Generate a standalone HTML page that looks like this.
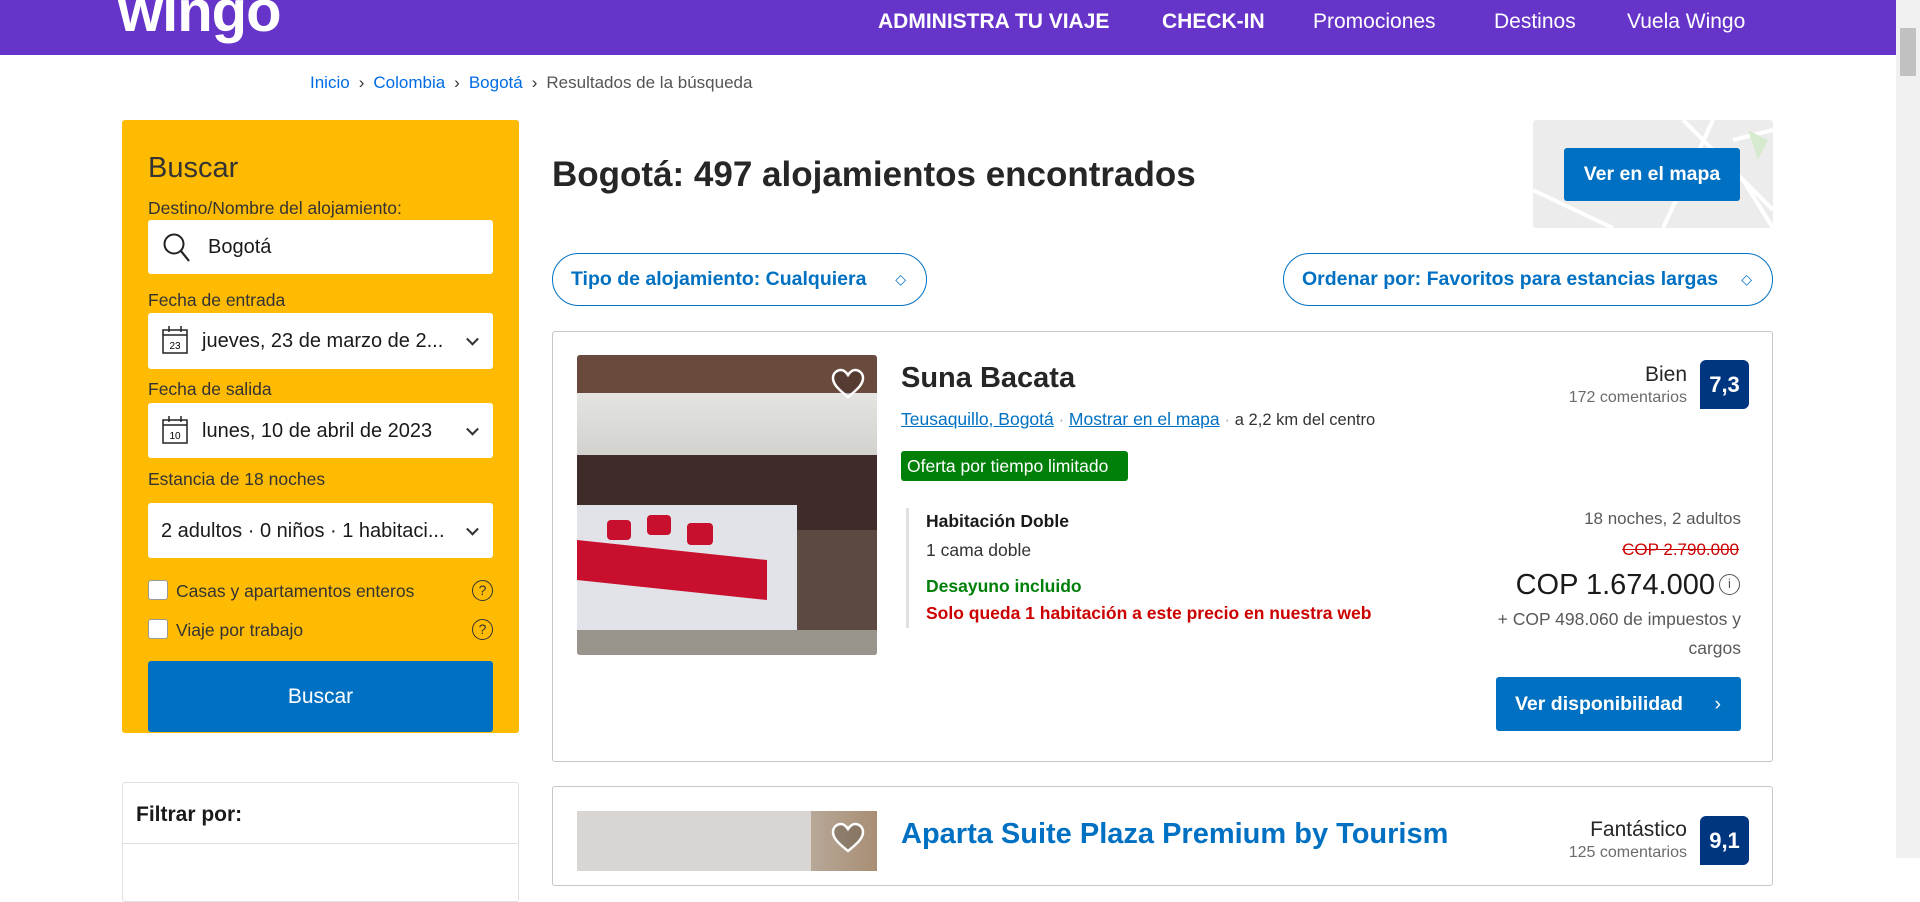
<!DOCTYPE html>
<html><head><meta charset="utf-8"><style>
*{box-sizing:border-box;margin:0;padding:0}
body{width:1920px;height:858px;overflow:hidden;background:#fff;font-family:"Liberation Sans",sans-serif;color:#1a1a1a;position:relative}
.a{position:absolute}
.hdr{left:0;top:0;width:1896px;height:55px;background:#6734c9}
.nav{color:#fff;font-size:21px;top:10px}
.sb{right:0;top:0;width:24px;height:858px;background:#f1f1f1}
.bc{top:73px;font-size:17px;color:#006ce4}
.side{left:122px;top:120px;width:397px;height:613px;background:#febb02;border-radius:3px}
.lbl{font-size:17.5px;color:#333;left:148px}
.inp{left:148px;width:345px;background:#fff;border-radius:3px;font-size:20px;color:#1a1a1a}
.chev{position:absolute;right:16px;top:50%;width:9px;height:9px;border-right:2px solid #333;border-bottom:2px solid #333;transform:translateY(-70%) rotate(45deg)}
.cb{left:148px;width:20px;height:20px;background:#fff;border:1px solid #999;border-radius:3px}
.q{left:472px;width:21px;height:21px;border:1.5px solid #333;border-radius:50%;font-size:14px;text-align:center;line-height:18px;color:#333}
.pill{height:53px;border:1px solid #0071c2;border-radius:27px;color:#0071c2;font-size:19.5px;font-weight:bold;line-height:51px;padding-left:18px}
.card{left:552px;width:1221px;border:1px solid #c6c6c6;border-radius:3px}
.lnk{color:#0071c2;text-decoration:underline;font-size:17.5px}
.score{width:49px;height:49px;background:#003580;color:#fff;font-size:22px;font-weight:bold;text-align:center;line-height:49px;border-radius:6px 6px 6px 0}
.sep{color:#333;padding:0 9px}
</style></head><body>
<div class="a hdr"></div>
<div class="a" style="left:118px;top:-22px;color:#fff;font-size:58px;font-weight:bold;letter-spacing:-1px">wingo</div>
<div class="a nav" style="left:878px;font-weight:bold">ADMINISTRA TU VIAJE</div>
<div class="a nav" style="left:1162px;font-weight:bold">CHECK-IN</div>
<div class="a nav" style="left:1313px">Promociones</div>
<div class="a nav" style="left:1494px">Destinos</div>
<div class="a nav" style="left:1627px">Vuela Wingo</div>
<div class="a sb"><div style="position:absolute;left:4px;top:28px;width:16px;height:48px;background:#c1c1c1"></div></div>

<div class="a bc" style="left:310px">Inicio<span class="sep">›</span>Colombia<span class="sep">›</span>Bogotá<span class="sep">›</span><span style="color:#555">Resultados de la búsqueda</span></div>

<div class="a side"></div>
<div class="a" style="left:148px;top:152px;font-size:29px;color:#333">Buscar</div>
<div class="a lbl" style="top:198px">Destino/Nombre del alojamiento:</div>
<div class="a inp" style="top:220px;height:54px;padding:16px 0 0 60px">Bogotá
<svg style="position:absolute;left:14px;top:12px" width="30" height="32" viewBox="0 0 30 32"><circle cx="12" cy="12" r="9.5" fill="none" stroke="#222" stroke-width="2"/><line x1="19" y1="19" x2="27" y2="29" stroke="#222" stroke-width="2.2"/></svg></div>
<div class="a lbl" style="top:290px">Fecha de entrada</div>
<div class="a inp" style="top:313px;height:56px;padding:17px 0 0 54px">jueves, 23 de marzo de 2...<div class="chev"></div>
<svg style="position:absolute;left:13px;top:12px" width="28" height="30" viewBox="0 0 28 30"><rect x="2" y="5" width="24" height="23" fill="none" stroke="#222" stroke-width="1.5"/><line x1="2" y1="10" x2="26" y2="10" stroke="#222" stroke-width="1.5"/><line x1="8" y1="1" x2="8" y2="7" stroke="#222" stroke-width="1.5"/><line x1="20" y1="1" x2="20" y2="7" stroke="#222" stroke-width="1.5"/><text x="14" y="24" font-size="10" text-anchor="middle" font-family="Liberation Sans">23</text></svg></div>
<div class="a lbl" style="top:379px">Fecha de salida</div>
<div class="a inp" style="top:403px;height:55px;padding:17px 0 0 54px">lunes, 10 de abril de 2023<div class="chev"></div>
<svg style="position:absolute;left:13px;top:12px" width="28" height="30" viewBox="0 0 28 30"><rect x="2" y="5" width="24" height="23" fill="none" stroke="#222" stroke-width="1.5"/><line x1="2" y1="10" x2="26" y2="10" stroke="#222" stroke-width="1.5"/><line x1="8" y1="1" x2="8" y2="7" stroke="#222" stroke-width="1.5"/><line x1="20" y1="1" x2="20" y2="7" stroke="#222" stroke-width="1.5"/><text x="14" y="24" font-size="10" text-anchor="middle" font-family="Liberation Sans">10</text></svg></div>
<div class="a lbl" style="top:469px">Estancia de 18 noches</div>
<div class="a inp" style="top:503px;height:55px;padding:17px 0 0 13px">2 adultos · 0 niños · 1 habitaci...<div class="chev"></div></div>
<div class="a cb" style="top:580px"></div><div class="a lbl" style="left:176px;top:581px">Casas y apartamentos enteros</div><div class="a q" style="top:580px">?</div>
<div class="a cb" style="top:619px"></div><div class="a lbl" style="left:176px;top:620px">Viaje por trabajo</div><div class="a q" style="top:619px">?</div>
<div class="a" style="left:148px;top:661px;width:345px;height:71px;background:#0071c2;border-radius:3px;color:#fff;font-size:21px;text-align:center;line-height:71px">Buscar</div>
<div class="a" style="left:122px;top:782px;width:397px;height:120px;border:1px solid #e0e0e0;border-radius:3px"></div>
<div class="a" style="left:136px;top:803px;font-size:21px;font-weight:bold">Filtrar por:</div>
<div class="a" style="left:123px;top:843px;width:395px;height:1px;background:#e0e0e0"></div>

<div class="a" style="left:552px;top:155px;font-size:35px;font-weight:bold;color:#262626">Bogotá: 497 alojamientos encontrados</div>
<div class="a" style="left:1533px;top:120px;width:240px;height:108px;background:#ececec;border-radius:3px;overflow:hidden">
<svg width="240" height="108"><path d="M150 0 L240 90 M180 0 L130 108 M200 20 L240 10 M0 70 L80 108 M210 60 L240 108" stroke="#fff" stroke-width="4" fill="none"/><path d="M215 10 L235 20 L225 40 Z" fill="#d6ead0"/></svg></div>
<div class="a" style="left:1564px;top:148px;width:176px;height:53px;background:#0071c2;border-radius:3px;color:#fff;font-size:19.5px;font-weight:bold;text-align:center;line-height:53px">Ver en el mapa</div>
<div class="a pill" style="left:552px;top:253px;width:375px">Tipo de alojamiento: Cualquiera <span style="position:absolute;right:20px;font-size:14px;font-weight:normal">◇</span></div>
<div class="a pill" style="left:1283px;top:253px;width:490px">Ordenar por: Favoritos para estancias largas <span style="position:absolute;right:20px;font-size:14px;font-weight:normal">◇</span></div>

<div class="a card" style="top:331px;height:431px"></div>
<div class="a" style="left:577px;top:355px;width:300px;height:300px;border-radius:3px;overflow:hidden;background:#d9d9d6">
<div style="position:absolute;left:0;top:0;width:300px;height:38px;background:#6b4a3e"></div>
<div style="position:absolute;left:0;top:38px;width:300px;height:70px;background:linear-gradient(#e4e4e0,#cfcfcb)"></div>
<div style="position:absolute;left:0;top:100px;width:300px;height:80px;background:#3e2b2a"></div>
<div style="position:absolute;left:0;top:150px;width:220px;height:150px;background:#e2e3e8"></div>
<div style="position:absolute;left:0;top:195px;width:190px;height:40px;background:#c8102e;transform:skewY(6deg)"></div>
<div style="position:absolute;left:30px;top:165px;width:24px;height:20px;background:#c8102e;border-radius:4px"></div>
<div style="position:absolute;left:70px;top:160px;width:24px;height:20px;background:#c8102e;border-radius:4px"></div>
<div style="position:absolute;left:110px;top:168px;width:26px;height:22px;background:#c8102e;border-radius:4px"></div>
<div style="position:absolute;left:220px;top:175px;width:80px;height:125px;background:#5c4a42"></div>
<div style="position:absolute;left:0;top:275px;width:300px;height:25px;background:#9a958c"></div>
</div>
<svg class="a" style="left:830px;top:368px" width="36" height="32" viewBox="0 0 36 32"><path d="M18 29 C8 21 3 16 3 10 C3 5 7 2 11 2 C14 2 16 4 18 7 C20 4 22 2 25 2 C29 2 33 5 33 10 C33 16 28 21 18 29Z" fill="rgba(0,0,0,0.2)" stroke="#fff" stroke-width="2.5"/></svg>
<div class="a" style="left:901px;top:362px;font-size:29px;font-weight:bold;color:#262626">Suna Bacata</div>
<div class="a" style="left:901px;top:409px;font-size:17px"><span class="lnk">Teusaquillo, Bogotá</span> <span style="color:#aaa">·</span> <span class="lnk">Mostrar en el mapa</span> <span style="color:#aaa">·</span> <span style="font-size:16.5px;color:#333">a 2,2 km del centro</span></div>
<div class="a" style="left:901px;top:451px;width:227px;height:30px;background:#008009;border-radius:3px;color:#fff;font-size:17.5px;line-height:30px;padding-left:6px;white-space:nowrap">Oferta por tiempo limitado</div>
<div class="a" style="left:906px;top:508px;width:3px;height:120px;background:#e0e0e0"></div>
<div class="a" style="left:926px;top:511px;font-size:17.5px;font-weight:bold">Habitación Doble</div>
<div class="a" style="left:926px;top:540px;font-size:17.5px;color:#333">1 cama doble</div>
<div class="a" style="left:926px;top:576px;font-size:17.5px;font-weight:bold;color:#008009">Desayuno incluido</div>
<div class="a" style="left:926px;top:603px;font-size:17.5px;font-weight:bold;color:#cc0000">Solo queda 1 habitación a este precio en nuestra web</div>
<div class="a" style="right:233px;top:363px;font-size:21px;color:#262626">Bien</div>
<div class="a" style="right:233px;top:389px;font-size:16px;color:#6b6b6b">172 comentarios</div>
<div class="a score" style="left:1700px;top:360px">7,3</div>
<div class="a" style="right:179px;top:509px;font-size:17px;color:#595959">18 noches, 2 adultos</div>
<div class="a" style="right:181px;top:540px;font-size:17px;color:#cc0000;text-decoration:line-through">COP 2.790.000</div>
<div class="a" style="right:205px;top:569px;font-size:29px;color:#1a1a1a">COP 1.674.000</div>
<div class="a" style="left:1719px;top:574px;width:21px;height:21px;border:1.5px solid #555;border-radius:50%;font-size:13px;text-align:center;line-height:18px;color:#555">i</div>
<div class="a" style="right:179px;top:609px;font-size:17.5px;color:#595959">+ COP 498.060 de impuestos y</div>
<div class="a" style="right:179px;top:638px;font-size:17.5px;color:#595959">cargos</div>
<div class="a" style="left:1496px;top:677px;width:245px;height:54px;background:#0071c2;border-radius:3px;color:#fff;font-size:19.5px;font-weight:bold;line-height:54px;padding-left:19px">Ver disponibilidad <span style="position:absolute;right:20px;font-weight:normal">›</span></div>

<div class="a card" style="top:786px;height:100px"></div>
<div class="a" style="left:577px;top:811px;width:300px;height:60px;background:linear-gradient(90deg,#d8d5d2 0,#d8d5d2 78%,#b7a898 78%,#a88e74 100%)"></div>
<svg class="a" style="left:830px;top:822px" width="36" height="32" viewBox="0 0 36 32"><path d="M18 29 C8 21 3 16 3 10 C3 5 7 2 11 2 C14 2 16 4 18 7 C20 4 22 2 25 2 C29 2 33 5 33 10 C33 16 28 21 18 29Z" fill="rgba(0,0,0,0.2)" stroke="#fff" stroke-width="2.5"/></svg>
<div class="a" style="left:901px;top:818px;font-size:29px;font-weight:bold;color:#0071c2">Aparta Suite Plaza Premium by Tourism</div>
<div class="a" style="right:233px;top:818px;font-size:21px;color:#262626">Fantástico</div>
<div class="a" style="right:233px;top:844px;font-size:16px;color:#6b6b6b">125 comentarios</div>
<div class="a score" style="left:1700px;top:816px">9,1</div>
</body></html>
